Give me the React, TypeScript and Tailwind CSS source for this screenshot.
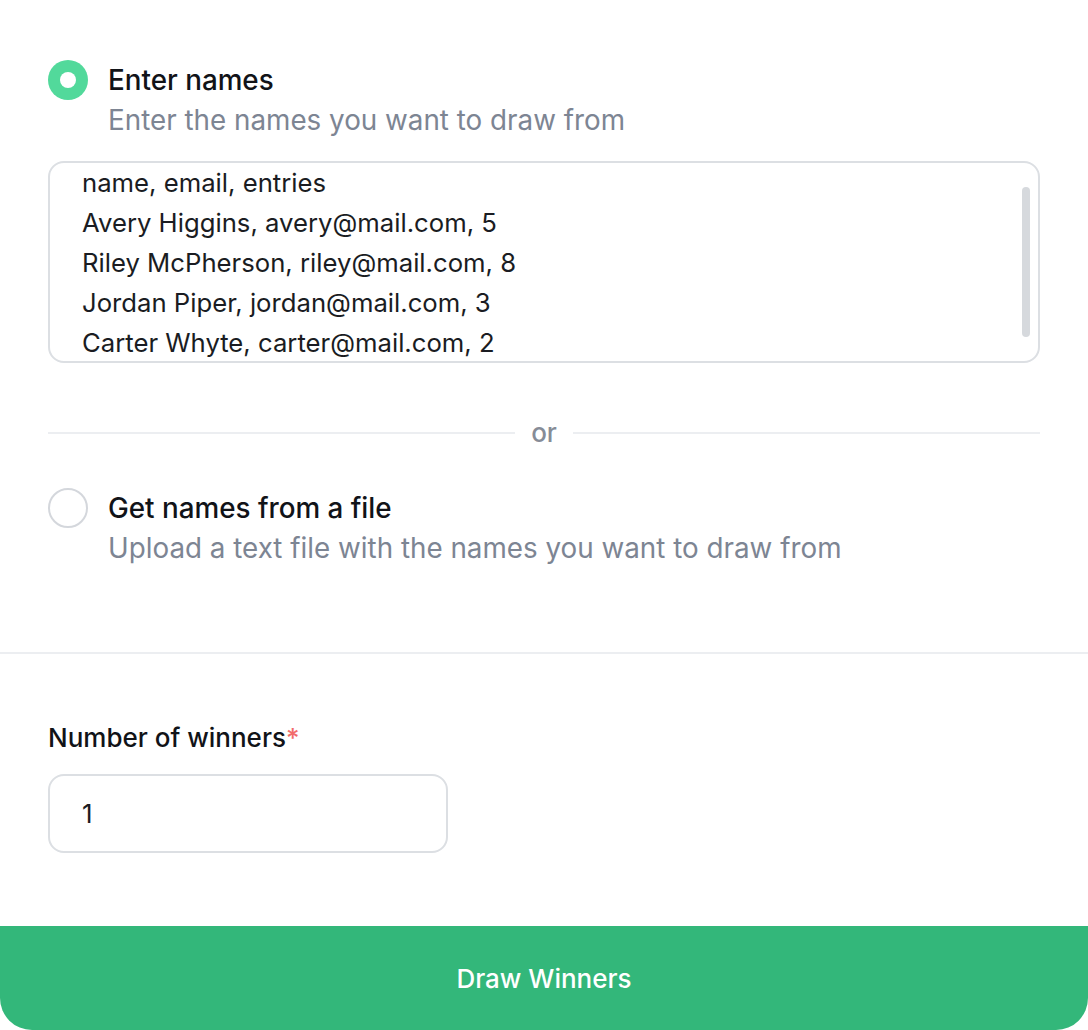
import React from "react";

const lines = [
  "name, email, entries",
  "Avery Higgins, avery@mail.com, 5",
  "Riley McPherson, riley@mail.com, 8",
  "Jordan Piper, jordan@mail.com, 3",
  "Carter Whyte, carter@mail.com, 2",
];

export default function App() {
  return (
    <div
      className="w-[1088px] h-[1030px] bg-white flex flex-col overflow-hidden"
      style={{ fontFamily: "Inter, 'Noto Sans', sans-serif" }}
    >
      <div className="px-12 pt-[60px]">
        <div className="flex gap-5">
          <div className="w-10 h-10 rounded-full bg-[#52d99b] flex items-center justify-center shrink-0">
            <div className="w-4 h-4 rounded-full bg-white" />
          </div>
          <div className="flex flex-col">
            <div className="text-[27.8px] leading-[40px] font-medium text-[#111318]">Enter names</div>
            <div className="text-[27.8px] leading-[40px] text-[#7d8593]">Enter the names you want to draw from</div>
          </div>
        </div>
        <div className="mt-[21px] h-[202px] border-2 border-[#dcdfe3] rounded-[16px] relative overflow-hidden">
          <div className="pl-[32px] text-[25.7px] leading-[40px] text-[#1a1c22]">
            {lines.map((l) => (
              <div key={l}>{l}</div>
            ))}
          </div>
          <div className="absolute right-[8px] top-[24px] w-[8px] h-[150px] rounded-full bg-[#d6d9dd]" />
        </div>
        <div className="mt-[50px] flex items-center gap-4">
          <div className="flex-1 h-[2px] bg-[#eceef1]" />
          <div className="text-[26px] leading-[40px] font-medium text-[#868c97]">or</div>
          <div className="flex-1 h-[2px] bg-[#eceef1]" />
        </div>
        <div className="mt-[35px] flex gap-5">
          <div className="w-10 h-10 rounded-full border-2 border-[#d4d7dc] shrink-0" />
          <div className="flex flex-col">
            <div className="text-[27.8px] leading-[40px] font-medium text-[#111318]">Get names from a file</div>
            <div className="text-[27.8px] leading-[40px] text-[#7d8593]">Upload a text file with the names you want to draw from</div>
          </div>
        </div>
      </div>
      <div className="mt-[84px] h-[2px] bg-[#eceef1]" />
      <div className="px-12 pt-[64px]">
        <div className="text-[26px] leading-[40px] font-medium text-[#111318]">
          Number of winners<span className="text-[#f26b6b]">*</span>
        </div>
        <div className="mt-4 w-[400px] h-[79px] border-2 border-[#dcdfe3] rounded-[16px] flex items-center pl-[32px] text-[26px] text-[#1a1c22]">
          1
        </div>
      </div>
      <div className="mt-auto h-[104px] bg-[#33b77a] rounded-b-[32px] flex items-center justify-center text-white text-[26px] font-medium">
        Draw Winners
      </div>
    </div>
  );
}
